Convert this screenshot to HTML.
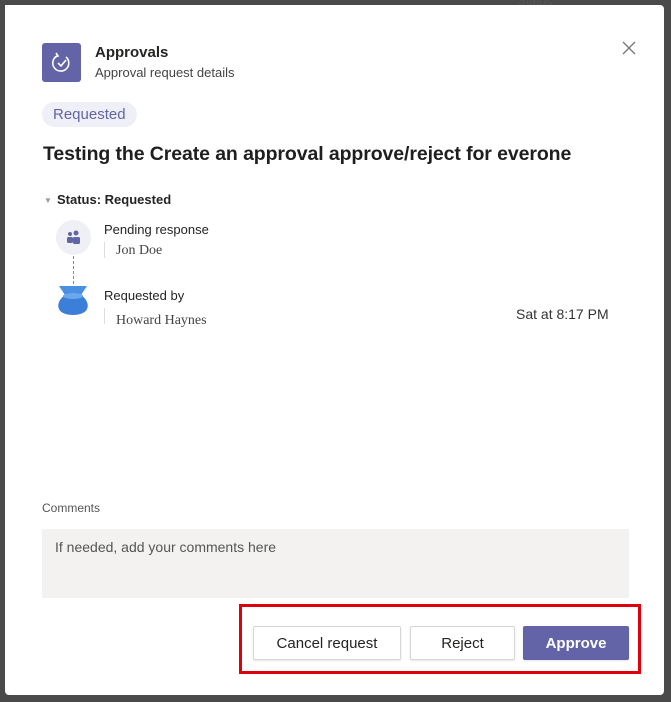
<!DOCTYPE html>
<html><head><style>
body{margin:0;width:671px;height:702px;background:#4a4a4a;position:relative;overflow:hidden;font-family:"Liberation Sans",sans-serif;color:#252423}
.p{position:absolute;left:5px;top:5px;width:659px;height:690px;background:#fff;border-radius:0 4px 4px 4px}
.a{position:absolute}
.btn{position:absolute;top:626px;height:34px;border:1px solid #d8d6d4;background:#fff;box-sizing:border-box;font-size:15px;text-align:center;line-height:34px;border-radius:2px;box-shadow:0 1px 2px rgba(0,0,0,.1)}
</style></head><body>
<div class="p"></div>
<div class="a" style="left:518px;top:-6px;font-size:12px;color:#555">Status</div>
<div class="a" style="left:42px;top:43px;width:39px;height:39px;background:#6264a7;border-radius:3px">
<svg width="39" height="39" viewBox="0 0 39 39"><path d="M24 14a8 8 0 1 1-9-1" fill="none" stroke="#fff" stroke-width="1.6"/><path d="M14 10l2 3-3 1" fill="none" stroke="#fff" stroke-width="1.6"/><path d="M16 20l3 3 5-6" fill="none" stroke="#fff" stroke-width="1.6"/></svg></div>
<div class="a" style="left:95px;top:44px;font-size:15px;font-weight:bold">Approvals</div>
<div class="a" style="left:95px;top:65px;font-size:13px;color:#444">Approval request details</div>
<svg class="a" style="left:621px;top:40px" width="16" height="16"><path d="M2 2L14 14M14 2L2 14" stroke="#777" stroke-width="1.3"/></svg>
<div class="a" style="left:42px;top:102px;height:25px;line-height:25px;padding:0 11px;background:#efeff8;border-radius:13px;color:#6264a7;font-size:15px">Requested</div>
<div class="a" style="left:43px;top:143px;font-size:19.5px;font-weight:bold;color:#1f1f1f;letter-spacing:-0.1px">Testing the Create an approval approve/reject for everone</div>
<div class="a" style="left:44px;top:196px;font-size:8px;color:#999">▼</div>
<div class="a" style="left:57px;top:192px;font-size:13px;font-weight:bold">Status: Requested</div>
<div class="a" style="left:56px;top:220px;width:35px;height:35px;border-radius:50%;background:#efeff6">
<svg width="35" height="35"><circle cx="14" cy="14" r="2" fill="#6264a7"/><circle cx="20" cy="13" r="2.5" fill="#6264a7"/><rect x="11" y="17" width="6" height="6" rx="1.5" fill="#6264a7"/><rect x="17" y="17" width="7" height="7" rx="1.5" fill="#6264a7"/></svg></div>
<div class="a" style="left:73px;top:256px;height:28px;border-left:1px dashed #888"></div>
<svg class="a" style="left:55px;top:284px" width="36" height="36"><path d="M4 2h28l-6 9h-16z" fill="#4a8fe0"/><path d="M10 11h16c6 4 8 10 6 14-3 8-25 8-28 0-2-4 0-10 6-14z" fill="#3b7fd8"/><ellipse cx="18" cy="12" rx="10" ry="3" fill="#6aa8ee"/></svg>
<div class="a" style="left:104px;top:222px;font-size:13px">Pending response</div>
<div class="a" style="left:104px;top:242px;height:16px;border-left:1px solid #ddd"></div>
<div class="a" style="left:116px;top:243px;font-size:14px;font-family:'Liberation Serif',serif;color:#444">Jon Doe</div>
<div class="a" style="left:104px;top:288px;font-size:13px">Requested by</div>
<div class="a" style="left:104px;top:308px;height:16px;border-left:1px solid #ddd"></div>
<div class="a" style="left:116px;top:313px;font-size:14px;font-family:'Liberation Serif',serif;color:#444">Howard Haynes</div>
<div class="a" style="left:516px;top:306px;font-size:14px;color:#333">Sat at 8:17 PM</div>
<div class="a" style="left:42px;top:501px;font-size:12px;color:#555">Comments</div>
<div class="a" style="left:42px;top:529px;width:587px;height:69px;background:#f3f2f1"></div>
<div class="a" style="left:55px;top:539px;font-size:14px;color:#555">If needed, add your comments here</div>
<div class="a" style="left:239px;top:604px;width:396px;height:64px;border:3px solid #e0000b"></div>
<div class="btn" style="left:253px;width:148px">Cancel request</div>
<div class="btn" style="left:410px;width:105px">Reject</div>
<div class="btn" style="left:523px;width:106px;background:#6264a7;border-color:#6264a7;color:#fff;font-weight:bold">Approve</div>
</body></html>
